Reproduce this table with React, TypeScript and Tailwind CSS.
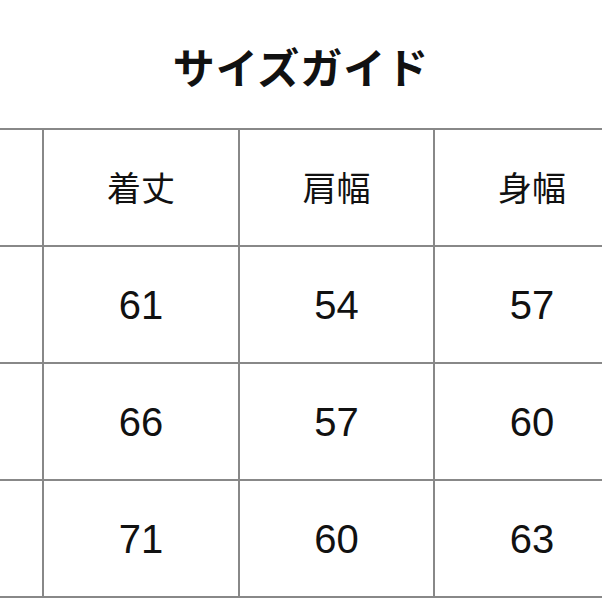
const headers = ["", "着丈", "肩幅", "身幅"];
const rows = [
  ["S", "61", "54", "57"],
  ["M", "66", "57", "60"],
  ["L", "71", "60", "63"],
];

export default function App() {
  return (
    <div className="w-[602px] h-[602px] overflow-hidden bg-white text-[#111]">
      <div className="h-[128px] flex items-center justify-center pt-[2px]">
        <h1
          className="text-[42px] font-bold tracking-[1px]"
          style={{ fontFamily: '"Noto Sans CJK JP", sans-serif' }}
        >
          サイズガイド
        </h1>
      </div>

      <div className="ml-[-152px] w-[784px] border-t-2 border-[#888] grid grid-cols-[196px_196px_195px_196px]">
        {headers.map((h, i) => (
          <div
            key={"h" + i}
            className="h-[117px] border-b-2 border-r-2 border-[#888] flex items-center justify-center text-[34px] pb-[2px]"
            style={{ fontFamily: '"Noto Sans CJK JP", sans-serif' }}
          >
            {h}
          </div>
        ))}
        {rows.map((r, ri) =>
          r.map((v, ci) => (
            <div
              key={ri + "-" + ci}
              className="h-[117px] border-b-2 border-r-2 border-[#888] flex items-center justify-center text-[40px]"
              style={{ fontFamily: '"Liberation Sans", Arial, sans-serif' }}
            >
              {ci === 0 ? "" : v}
            </div>
          ))
        )}
      </div>
    </div>
  );
}
